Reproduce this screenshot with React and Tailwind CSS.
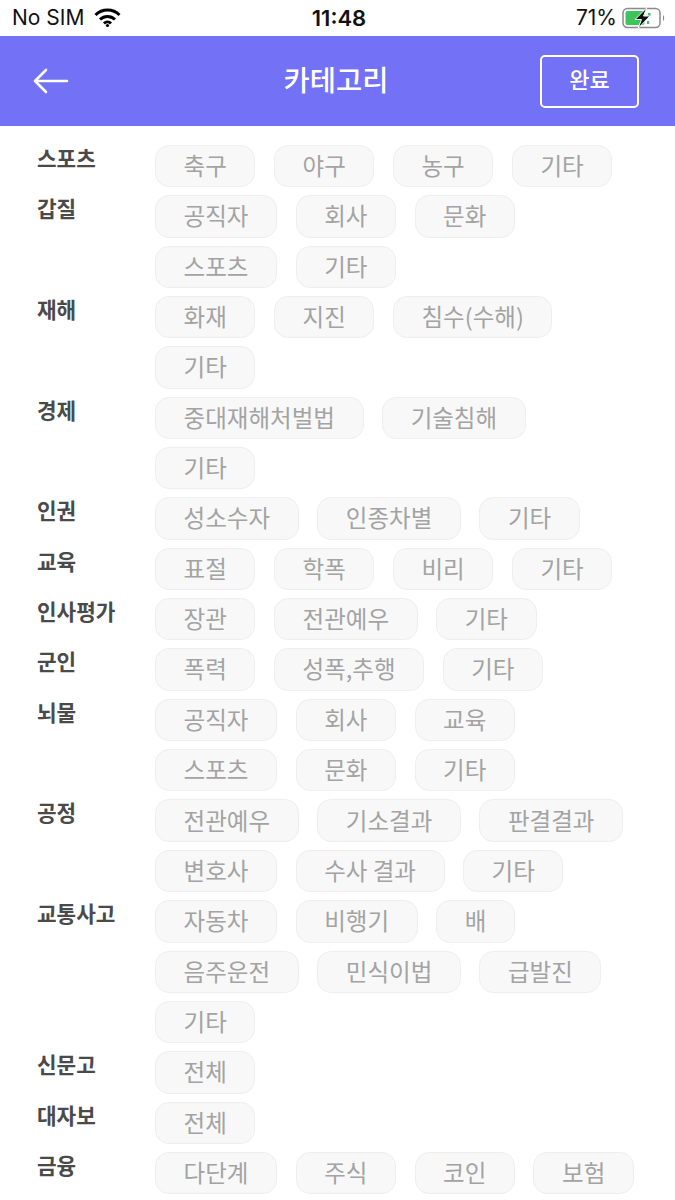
const categories = [
  { name: "스포츠", items: ["축구", "야구", "농구", "기타"] },
  { name: "갑질", items: ["공직자", "회사", "문화", "스포츠", "기타"] },
  { name: "재해", items: ["화재", "지진", "침수(수해)", "기타"] },
  { name: "경제", items: ["중대재해처벌법", "기술침해", "기타"] },
  { name: "인권", items: ["성소수자", "인종차별", "기타"] },
  { name: "교육", items: ["표절", "학폭", "비리", "기타"] },
  { name: "인사평가", items: ["장관", "전관예우", "기타"] },
  { name: "군인", items: ["폭력", "성폭,추행", "기타"] },
  { name: "뇌물", items: ["공직자", "회사", "교육", "스포츠", "문화", "기타"] },
  { name: "공정", items: ["전관예우", "기소결과", "판결결과", "변호사", "수사 결과", "기타"] },
  { name: "교통사고", items: ["자동차", "비행기", "배", "음주운전", "민식이법", "급발진", "기타"] },
  { name: "신문고", items: ["전체"] },
  { name: "대자보", items: ["전체"] },
  { name: "금융", items: ["다단계", "주식", "코인", "보험"] },
];

function StatusBar() {
  return (
    <div className="h-9 flex items-center justify-between pl-3 pr-[9px] text-[21px] text-[#111] font-['Inter',sans-serif]">
      <div className="flex items-center gap-[10px] w-[200px]">
        <span>No SIM</span>
        <svg width="27" height="20" viewBox="0 0 27 20" fill="none" stroke="#000" strokeWidth="3" strokeLinecap="butt">
          <path d="M1.5 7 A17 17 0 0 1 25.5 7" />
          <path d="M6 11.5 A11 11 0 0 1 21 11.5" />
          <path d="M10 15.5 A5 5 0 0 1 17 15.5" />
          <circle cx="13.5" cy="17.5" r="1.6" fill="#000" stroke="none" />
        </svg>
      </div>
      <span className="font-semibold text-[22px]">11:48</span>
      <div className="flex items-center justify-end gap-[5px] w-[200px]">
        <span>71%</span>
        <svg width="44" height="22" viewBox="0 0 44 22" fill="none">
          <rect x="1" y="1.5" width="37" height="19" rx="4.5" stroke="#8a8a8a" strokeWidth="1.5" />
          <rect x="3.5" y="4" width="19" height="14" rx="2" fill="#3dc45a" />
          <rect x="26" y="6" width="2.5" height="3" fill="#3dc45a" />
          <rect x="25" y="14" width="2" height="3" fill="#3dc45a" />
          <path d="M41 8 C42.5 8.5 42.5 13.5 41 14 Z" fill="#8a8a8a" />
          <path d="M25 0.5 L13 12.5 H19.5 L16 21.5 L28 9 H21.5 Z" fill="#111" stroke="#fff" strokeWidth="1" />
        </svg>
      </div>
    </div>
  );
}

function Header() {
  return (
    <div className="h-[90px] bg-[#7371f5] flex items-center pl-[33px] pr-9 text-white">
      <div className="flex-1">
        <svg width="36" height="26" viewBox="0 0 36 26" fill="none" stroke="#fff" strokeWidth="2.6" strokeLinecap="round" strokeLinejoin="round">
          <path d="M34 13 H2 M13 2 L2 13 L13 24" />
        </svg>
      </div>
      <h1 className="text-[28.5px] font-medium leading-none pb-[3px]">카테고리</h1>
      <div className="flex-1 flex justify-end">
        <button className="w-[99px] h-[53px] pb-[5px] border-2 border-white rounded-[5px] text-[22px] font-medium">
          완료
        </button>
      </div>
    </div>
  );
}

function App() {
  return (
    <div className="w-[675px] h-[1200px] overflow-hidden bg-white font-['Noto_Sans_CJK_KR',sans-serif]">
      <StatusBar />
      <Header />

      <div className="flex flex-col gap-2 pt-[19px] pl-[37px]">
        {categories.map((cat) => (
          <div key={cat.name} className="flex">
            <div className="w-[118px] shrink-0 text-[21.3px] leading-[26px] font-bold text-[#4a4a4a]">
              {cat.name}
            </div>
            <div className="w-[482px] flex flex-wrap gap-x-[18.5px] gap-y-2">
              {cat.items.map((item, i) => (
                <span
                  key={i}
                  className="h-[42.35px] px-[27.6px] pb-px flex items-center border border-[#eeeeee] bg-[#f8f8f8] rounded-[14px] text-[23.5px] text-[#a3a3a3] whitespace-nowrap"
                >
                  {item}
                </span>
              ))}
            </div>
          </div>
        ))}
      </div>
    </div>
  );
}

export default App;
